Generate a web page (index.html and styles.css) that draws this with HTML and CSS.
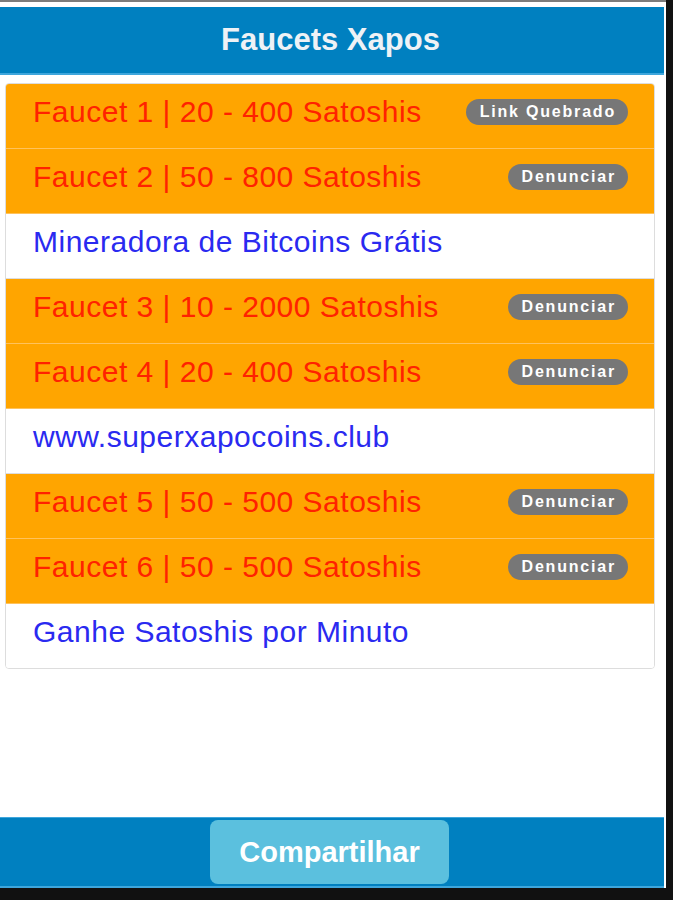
FILE: index.html
```html
<!DOCTYPE html>
<html lang="pt">
<head>
  <meta charset="UTF-8" />
  <meta name="viewport" content="width=device-width, initial-scale=1.0" />
  <title>Faucets Xapos</title>
  <link rel="stylesheet" href="styles.css">
</head>
<body>
  <div class="app">
    <div class="header">
      <h1>Faucets Xapos</h1>
    </div>

    <div class="list">
      <a class="item faucet" href="#">
        <span>Faucet 1 | 20 - 400 Satoshis</span>
        <span class="badge">Link Quebrado</span>
      </a>
      <a class="item faucet" href="#">
        <span>Faucet 2 | 50 - 800 Satoshis</span>
        <span class="badge">Denunciar</span>
      </a>
      <a class="item promo" href="#">
        <span>Mineradora de Bitcoins Grátis</span>
      </a>
      <a class="item faucet" href="#">
        <span>Faucet 3 | 10 - 2000 Satoshis</span>
        <span class="badge">Denunciar</span>
      </a>
      <a class="item faucet" href="#">
        <span>Faucet 4 | 20 - 400 Satoshis</span>
        <span class="badge">Denunciar</span>
      </a>
      <a class="item promo" href="#">
        <span>www.superxapocoins.club</span>
      </a>
      <a class="item faucet" href="#">
        <span>Faucet 5 | 50 - 500 Satoshis</span>
        <span class="badge">Denunciar</span>
      </a>
      <a class="item faucet" href="#">
        <span>Faucet 6 | 50 - 500 Satoshis</span>
        <span class="badge">Denunciar</span>
      </a>
      <a class="item promo" href="#">
        <span>Ganhe Satoshis por Minuto</span>
      </a>
    </div>

    <div class="footer">
      <button class="share">Compartilhar</button>
    </div>
  </div>
</body>
</html>
```

FILE: styles.css
```css
body {
  margin: 0;
  background: #111;
  font-family: 'Liberation Sans', Arial, sans-serif;
}
.app {
  width: 666px;
  height: 888px;
  box-sizing: border-box;
  background: #fff;
  border-top: 2px solid #7c7c7c;
  padding-top: 5px;
  display: flex;
  flex-direction: column;
}
.header {
  height: 66px;
  margin-right: 2px;
  background: #0080c0;
  border-bottom: 2px solid #3ea6dc;
  display: flex;
  align-items: center;
  justify-content: center;
}
.header h1 {
  margin: 0 0 0 -3px;
  color: #eef2f6;
  font-size: 31px;
  font-weight: bold;
}
.list {
  margin: 8px 11px 0 5px;
  border: 1px solid #ddd;
  border-radius: 4px;
  overflow: hidden;
}
.item {
  display: flex;
  align-items: center;
  justify-content: space-between;
  height: 55px;
  padding: 0 26px 9px 27px;
  font-size: 30px;
  letter-spacing: 0.5px;
  text-decoration: none;
  border-bottom: 1px solid #ddd;
}
.item:last-child {
  border-bottom: none;
}
.faucet {
  background: #ffa500;
  color: #ff2200;
  border-bottom-color: #ffc25c;
}
.promo {
  background: #fff;
  color: #2a2af0;
}
.badge {
  background: #777;
  color: #fff;
  font-size: 16px;
  font-weight: bold;
  letter-spacing: 1.8px;
  height: 26px;
  line-height: 26px;
  padding: 0 12px 0 14px;
  border-radius: 13px;
}
.footer {
  margin-top: auto;
  margin-right: 2px;
  height: 68px;
  background: #0080c0;
  border-top: 1px solid #3ea6dc;
  border-bottom: 2px solid #3ea6dc;
  display: flex;
  justify-content: center;
  align-items: center;
}
.share {
  width: 239px;
  height: 64px;
  margin-right: 5px;
  background: #5bc0de;
  color: #fff;
  border: none;
  border-radius: 8px;
  font-family: inherit;
  font-size: 29px;
  font-weight: bold;
  cursor: pointer;
}
```
